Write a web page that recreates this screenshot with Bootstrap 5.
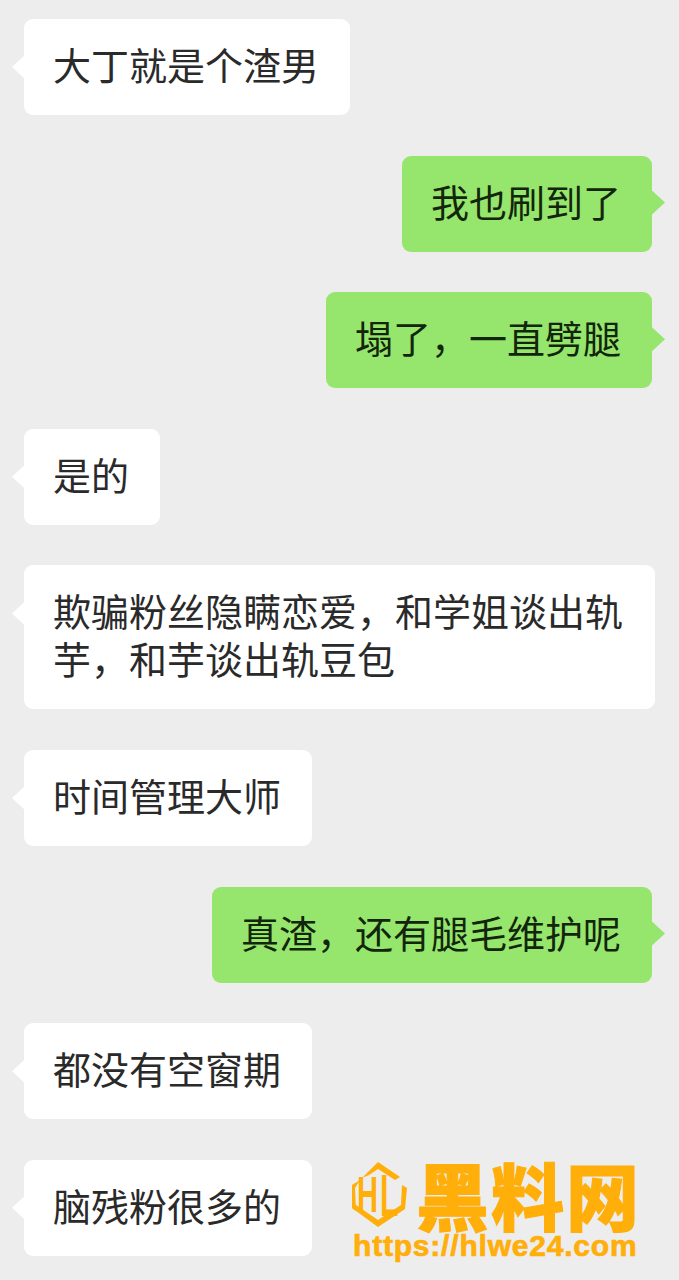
<!DOCTYPE html>
<html lang="zh-CN">
<head>
    <title>聊天记录</title>
    <meta charset="UTF-8">
    <meta name="viewport" content="width=device-width, initial-scale=1.0">
    <link href="https://cdn.jsdelivr.net/npm/bootstrap@5.3.2/dist/css/bootstrap.min.css" rel="stylesheet">
    <style>
        body {
            background-color: #ededed;
            font-family: "Noto Sans CJK SC", sans-serif;
        }

        .chat-page {
            height: 1280px;
            overflow: hidden;
            padding: 19px 24px 0;
            gap: 40.6px;
        }

        .bubble {
            font-size: 38px;
            line-height: 48px;
            padding: 21px 31px 27px 29px;
            border-radius: 9px;
            color: #2a2a2a;
            max-width: 631px;
        }

        .bubble::after {
            content: "";
            position: absolute;
            top: 36px;
            width: 13px;
            height: 24px;
        }

        .bubble-in {
            background-color: #fff;
        }

        .bubble-in::after {
            left: -12px;
            background-color: #fff;
            clip-path: polygon(100% 0, 0 50%, 100% 100%);
        }

        .bubble-out {
            background-color: #96e56c;
            color: #12260c;
            margin-right: 3px;
        }

        .bubble-out::after {
            top: 35px;
            right: -13px;
            background-color: #96e56c;
            clip-path: polygon(0 0, 100% 50%, 0 100%);
        }

        .watermark {
            position: absolute;
            left: 345px;
            top: 1155px;
            width: 300px;
            color: #ffae0a;
        }

        .wm-mark {
            width: 70px;
            height: 80px;
        }

        .wm-mark text {
            font-family: "Liberation Sans", sans-serif;
            font-weight: 700;
            fill: #ffae0a;
        }

        .wm-name {
            font-size: 73px;
            line-height: 72px;
            font-weight: 900;
            letter-spacing: 2px;
            margin-left: 1px;
            margin-top: -4px;
            -webkit-text-stroke: 1px #ffae0a;
        }

        .wm-url {
            font-family: "Liberation Sans", sans-serif;
            font-weight: 700;
            font-size: 30px;
            line-height: 24px;
            letter-spacing: .8px;
            margin-left: 8px;
            margin-top: -1px;
            -webkit-text-stroke: .7px #ffae0a;
        }
    </style>
</head>
<body class="position-relative">
<div class="chat-page d-flex flex-column">
    <div class="bubble bubble-in position-relative align-self-start">大丁就是个渣男</div>
    <div class="bubble bubble-out position-relative align-self-end">我也刷到了</div>
    <div class="bubble bubble-out position-relative align-self-end">塌了，一直劈腿</div>
    <div class="bubble bubble-in position-relative align-self-start">是的</div>
    <div class="bubble bubble-in position-relative align-self-start">欺骗粉丝隐瞒恋爱，和学姐谈出轨芋，和芋谈出轨豆包</div>
    <div class="bubble bubble-in position-relative align-self-start">时间管理大师</div>
    <div class="bubble bubble-out position-relative align-self-end">真渣，还有腿毛维护呢</div>
    <div class="bubble bubble-in position-relative align-self-start">都没有空窗期</div>
    <div class="bubble bubble-in position-relative align-self-start">脑残粉很多的</div>
</div>

<div class="watermark">
    <div class="d-flex align-items-center">
        <svg class="wm-mark flex-shrink-0" viewBox="0 0 70 80">
            <!-- hexagon pieces around the two letters -->
            <path d="M33 7 L55 22 L50 25 L33 14 L24 20 L17 23 Z" fill="#ffae0a"/>
            <path d="M15 25 L7 30 L7 53 L11 56 L10 33 Z" fill="#ffae0a"/>
            <path d="M7 53 L33 72 L60 54 L62 33 L57 30 L56 50 L33 65 L11 50 Z" fill="#ffae0a"/>
            <text transform="translate(12 57) scale(.58 1)" font-size="50">H</text>
            <text transform="translate(35 61) scale(.5 1)" font-size="60">L</text>
        </svg>
        <div class="wm-name text-nowrap">黑料网</div>
    </div>
    <div class="wm-url text-nowrap">https://hlwe24.com</div>
</div>

<script src="https://cdn.jsdelivr.net/npm/bootstrap@5.3.2/dist/js/bootstrap.bundle.min.js"></script>
</body>
</html>
